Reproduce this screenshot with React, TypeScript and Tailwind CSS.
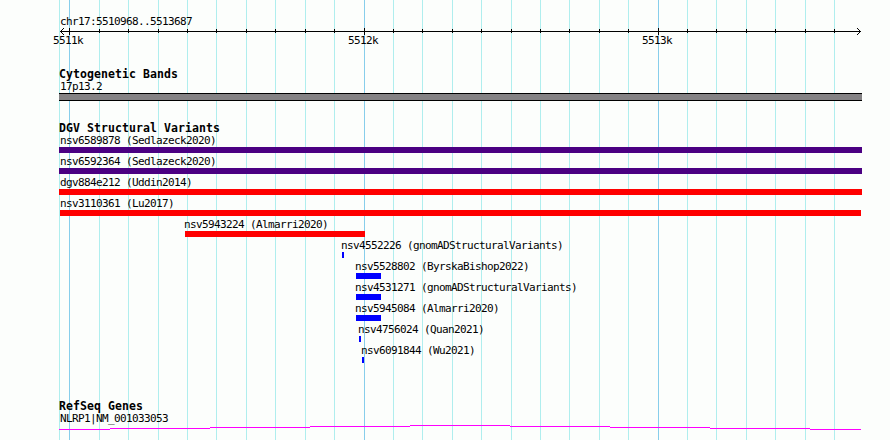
// Genome browser region view: ruler, cytogenetic band, structural variants and genes

type Variant = {
  id: string;
  start: number;
  end: number;
  color: string;
  labelX?: number;
};

const VIEW_LEFT = 59;

const minorLines = [
  99, 128, 158, 187, 216, 246, 275, 305, 334, 393, 422, 452, 481, 511, 540, 569, 599, 628, 687,
  716, 746, 775, 805, 834,
];
const majorLines = [69, 364, 658];

const variants: Variant[] = [
  { id: 'nsv6589878 (Sedlazeck2020)', start: 59, end: 862, color: 'bg-[#4b0082]', labelX: 60 },
  { id: 'nsv6592364 (Sedlazeck2020)', start: 59, end: 862, color: 'bg-[#4b0082]', labelX: 60 },
  { id: 'dgv884e212 (Uddin2014)', start: 59, end: 862, color: 'bg-[#ff0000]', labelX: 60 },
  { id: 'nsv3110361 (Lu2017)', start: 60, end: 861, color: 'bg-[#ff0000]', labelX: 60 },
  { id: 'nsv5943224 (Almarri2020)', start: 185, end: 365, color: 'bg-[#ff0000]' },
  { id: 'nsv4552226 (gnomADStructuralVariants)', start: 342, end: 344, color: 'bg-[#0000ff]' },
  { id: 'nsv5528802 (ByrskaBishop2022)', start: 356, end: 381, color: 'bg-[#0000ff]' },
  { id: 'nsv4531271 (gnomADStructuralVariants)', start: 356, end: 381, color: 'bg-[#0000ff]' },
  { id: 'nsv5945084 (Almarri2020)', start: 356, end: 381, color: 'bg-[#0000ff]' },
  { id: 'nsv4756024 (Quan2021)', start: 359, end: 361, color: 'bg-[#0000ff]' },
  { id: 'nsv6091844 (Wu2021)', start: 362, end: 364, color: 'bg-[#0000ff]' },
];

// The intron line arches by one pixel per segment
const intron = [
  [59, 110, 4],
  [110, 210, 3],
  [210, 310, 2],
  [310, 410, 1],
  [410, 510, 0],
  [510, 610, 1],
  [610, 710, 2],
  [710, 810, 3],
  [810, 861, 4],
];

function GridLines() {
  return (
    <svg
      className="absolute inset-0"
      width="890"
      height="440"
      shapeRendering="crispEdges"
      aria-hidden="true"
    >
      {[VIEW_LEFT, ...minorLines].map((x) => (
        <rect key={x} x={x} y="0" width="1" height="440" fill="#afeeee" />
      ))}
      {majorLines.map((x) => (
        <rect key={x} x={x} y="0" width="1" height="440" fill="#87ceeb" />
      ))}
    </svg>
  );
}

function Ruler() {
  return (
    <svg className="block" width="890" height="7" shapeRendering="crispEdges" aria-hidden="true">
      <rect x="60" y="3" width="801" height="1" />
      {minorLines.map((x) => (
        <rect key={x} x={x} y="1" width="1" height="4" />
      ))}
      {majorLines.map((x) => (
        <rect key={x} x={x} y="0" width="1" height="7" />
      ))}
      {[1, 2, 3].map((d) => (
        <g key={d}>
          <rect x={60 + d} y={3 - d} width="1" height="1" />
          <rect x={60 + d} y={3 + d} width="1" height="1" />
          <rect x={860 - d} y={3 - d} width="1" height="1" />
          <rect x={860 - d} y={3 + d} width="1" height="1" />
        </g>
      ))}
    </svg>
  );
}

function TrackTitle({ children }: { children: string }) {
  return (
    <h2 className="ml-[59px] h-3 text-[11.5px] leading-3 font-bold tracking-[0.076px]">
      {children}
    </h2>
  );
}

function VariantRow({ variant }: { variant: Variant }) {
  const { id, start, end, color, labelX } = variant;
  return (
    <div className="h-[21px]">
      <p className="h-[13px]" style={{ marginLeft: labelX ?? start - 1 }}>
        {id}
      </p>
      <div className={`h-1.5 ${color}`} style={{ marginLeft: start, width: end - start }} />
    </div>
  );
}

export default function App() {
  return (
    <div className="relative h-[440px] w-[890px] overflow-hidden bg-[#fcfefc] font-['DejaVu_Sans_Mono',monospace] text-[11px] leading-[14px] tracking-[-0.622px] whitespace-pre text-black">
      <GridLines />
      <div className="relative">
        {/* Ruler */}
        <header className="h-[68px] pt-[15px]">
          <p className="mb-px ml-[60px] h-3">chr17:5510968..5513687</p>
          <Ruler />
          <div className="-mt-px flex h-3 pl-[53px]">
            <span className="w-[295px]">5511k</span>
            <span className="w-[294px]">5512k</span>
            <span>5513k</span>
          </div>
        </header>

        {/* Cytogenetic bands */}
        <section className="h-[54px]">
          <TrackTitle>Cytogenetic Bands</TrackTitle>
          <p className="mb-px ml-[60px] h-3">17p13.2</p>
          <div className="ml-[59px] h-2 w-[803px] border-y border-black bg-[#848284]" />
        </section>

        {/* Structural variants */}
        <section className="h-[278px]">
          <TrackTitle>DGV Structural Variants</TrackTitle>
          {variants.map((v) => (
            <VariantRow key={v.id} variant={v} />
          ))}
        </section>

        {/* Genes */}
        <section>
          <TrackTitle>RefSeq Genes</TrackTitle>
          <p className="mb-px ml-[60px] h-3">NLRP1|NM_001033053</p>
          <svg className="block" width="890" height="5" shapeRendering="crispEdges">
            {intron.map(([x1, x2, y]) => (
              <rect key={x1} x={x1} y={y} width={x2 - x1} height="1" fill="#ff00ff" />
            ))}
          </svg>
        </section>
      </div>
    </div>
  );
}
